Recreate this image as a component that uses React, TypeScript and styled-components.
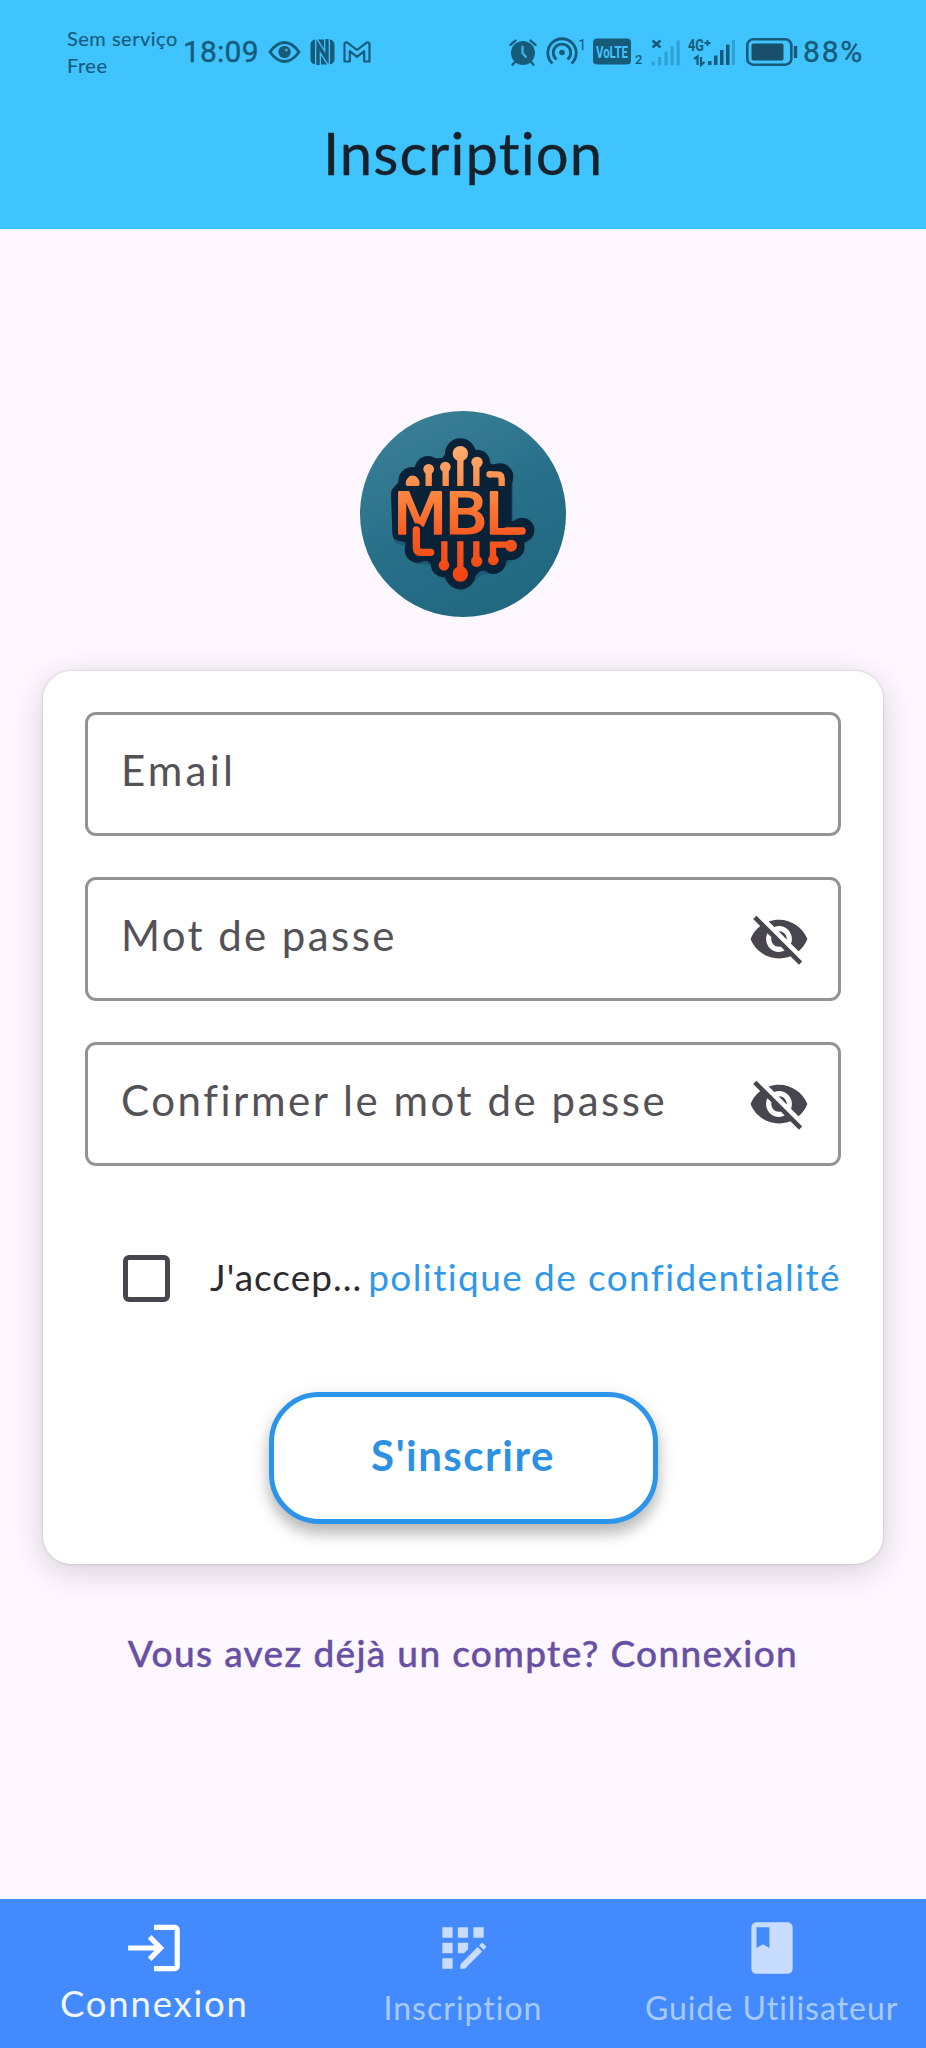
import React from "react";
import styled, { createGlobalStyle } from "styled-components";
import { MdVisibilityOff, MdLogin, MdAppRegistration, MdBook } from "react-icons/md";

const GlobalStyle = createGlobalStyle`
  * { box-sizing: border-box; }
  body { margin: 0; background: #fef7ff; font-family: Lato, "Liberation Sans", sans-serif; }
  button, input { font-family: inherit; }
`;

const ink = "#175b7a";

const Screen = styled.div`
  width: 926px;
  height: 2048px;
  display: flex;
  flex-direction: column;
  background: #fef7ff;
  overflow: hidden;
`;

const Header = styled.header`
  height: 229px;
  background: #40c4ff;
  display: flex;
  flex-direction: column;
`;

const StatusBar = styled.div`
  height: 104px;
  padding: 0 62px 0 67px;
  display: flex;
  justify-content: space-between;
  align-items: center;
  color: ${ink};
`;

const StatusGroup = styled.div`
  display: flex;
  align-items: center;
  svg { display: block; flex: none; overflow: visible; }
`;

const Carrier = styled.div`
  width: 116px;
  font-size: 20px;
  line-height: 27px;
  letter-spacing: 0.5px;
  -webkit-text-stroke: 0.15px ${ink};
  white-space: nowrap;
  padding-bottom: 1px;
`;

const StatusNumber = styled.span<{ $width: number; $track?: number }>`
  width: ${(p) => p.$width}px;
  font-family: Roboto, sans-serif;
  font-size: 30px;
  line-height: 30px;
  letter-spacing: ${(p) => p.$track ?? 0}px;
  -webkit-text-stroke: 0.4px ${ink};
  white-space: nowrap;
`;

const Gap = styled.span<{ $w: number }>`
  flex: none;
  width: ${(p) => p.$w}px;
`;

const Title = styled.h1`
  margin: 0;
  height: 98px;
  line-height: 98px;
  text-align: center;
  font-size: 58px;
  font-weight: 400;
  letter-spacing: 1.1px;
  -webkit-text-stroke: 0.3px #16222b;
  color: #16222b;
`;

const Main = styled.main`
  flex: 1;
  display: flex;
  flex-direction: column;
  align-items: center;
  padding-top: 182px;
`;

const LogoSvg = styled.svg`
  display: block;
  width: 206px;
  height: 206px;
`;

const Card = styled.form`
  width: 840px;
  height: 893px;
  margin-top: 54px;
  padding: 41px 42px 0;
  border-radius: 28px;
  background: #fff;
  box-shadow: 0 0 3px rgba(0, 0, 0, 0.18), 0 8px 34px rgba(0, 0, 0, 0.16);
  display: flex;
  flex-direction: column;
`;

const Field = styled.div`
  height: 124px;
  margin-bottom: 41px;
  padding: 0 28px 0 33px;
  border: 3px solid #939393;
  border-radius: 11px;
  display: flex;
  align-items: center;
  justify-content: space-between;
  color: #49454f;
`;

const FieldLabel = styled.span<{ $track: number }>`
  font-size: 42px;
  line-height: 50px;
  padding-bottom: 8px;
  letter-spacing: ${(p) => p.$track}px;
  color: #545257;
  white-space: nowrap;
`;

const Consent = styled.div`
  margin-top: 47px;
  height: 48px;
  padding-left: 38px;
  display: flex;
  align-items: center;
  font-size: 37px;
  line-height: 48px;
  white-space: nowrap;
`;

const CheckBox = styled.span`
  width: 47px;
  height: 47px;
  border: 5px solid #49454f;
  border-radius: 6px;
  margin-right: 40px;
  flex: none;
`;

const ConsentText = styled.span`
  width: 159px;
  letter-spacing: 1px;
  color: #2c2b30;
  padding-bottom: 3px;
`;

const PolicyLink = styled.a`
  color: #2f98ea;
  letter-spacing: 1.4px;
  padding-bottom: 3px;
`;

const SubmitButton = styled.button`
  align-self: center;
  margin-top: 90px;
  width: 389px;
  height: 132px;
  padding: 0 0 6px;
  border: 5px solid #2d95e9;
  border-radius: 50px;
  background: #fff;
  box-shadow: 0 10px 14px rgba(0, 0, 0, 0.2), 0 6px 20px rgba(0, 0, 0, 0.12);
  color: #2d91e3;
  font-size: 42px;
  font-weight: 700;
  letter-spacing: 1.5px;
`;

const AccountLink = styled.a`
  margin-top: 65px;
  font-size: 37px;
  line-height: 48px;
  font-weight: 500;
  letter-spacing: 1.35px;
  -webkit-text-stroke: 0.4px #6750a4;
  color: #6750a4;
  white-space: nowrap;
`;

const BottomNav = styled.nav`
  height: 149px;
  background: #448aff;
  display: grid;
  grid-template-columns: repeat(3, 1fr);
`;

const NavItem = styled.a<{ $active?: boolean }>`
  display: flex;
  flex-direction: column;
  align-items: center;
  padding-top: 18px;
  color: ${(p) => (p.$active ? "#fff" : "#c7dcff")};
  svg { display: block; flex: none; }
`;

const NavLabel = styled.span<{ $active?: boolean; $track: number }>`
  margin-top: ${(p) => (p.$active ? 2 : 7)}px;
  font-size: ${(p) => (p.$active ? 36.5 : 32)}px;
  line-height: 44px;
  letter-spacing: ${(p) => p.$track}px;
  color: ${(p) => (p.$active ? "#f2f7ff" : "#a9cafd")};
  white-space: nowrap;
`;

const EyeIcon = () => (
  <svg width="33" height="24" viewBox="0 0 33 24" fill="none">
    <path d="M2 12C7 5 11 2.5 16.5 2.5S26 5 31 12c-5 7-9 9.5-14.5 9.5S7 19 2 12Z" stroke={ink} strokeWidth="2.8" />
    <circle cx="16.5" cy="12" r="6.2" fill={ink} />
    <circle cx="18.3" cy="10" r="1.5" fill="#40a5d2" />
  </svg>
);

const NfcIcon = () => (
  <svg width="25" height="26" viewBox="0 0 25 26" fill="none">
    <rect x="0.5" y="0.5" width="24" height="25" rx="5" fill={ink} />
    <path d="M8 26V6L17 20V0" stroke="#40c4ff" strokeWidth="6" />
    <path d="M8 26V6L17 20V0" stroke={ink} strokeWidth="3.400" />
  </svg>
);

const MailIcon = () => (
  <svg width="28" height="22" viewBox="0 0 28 22" fill="none">
    <path
      d="M1.5 20.5V3.2C1.5 1.5 3.4.8 4.7 1.8L14 9l9.3-7.2c1.3-1 3.2-.3 3.2 1.4v17.3h-5.3V10.2L14 15.8l-7.2-5.6v10.3Z"
      stroke={ink}
      strokeWidth="2.2"
      strokeLinejoin="round"
    />
  </svg>
);

const AlarmIcon = () => (
  <svg width="28" height="27" viewBox="0 0 28 27" fill="none" strokeLinecap="round">
    <circle cx="14" cy="14" r="12" fill={ink} />
    <path d="M1.500 5.800l5-4.200M26.500 5.800l-5-4.200M6 23l-2.500 2.700M22 23l2.500 2.700" stroke={ink} strokeWidth="2.400" />
    <path d="M13.500 7.500V14l3.500 4" stroke="#40b4e8" strokeWidth="2.200" />
  </svg>
);

const HotspotIcon = () => (
  <svg width="42" height="30" viewBox="0 0 42 30" fill="none">
    <path d="M6.500 26.500A14.200 14.200 0 1 1 25.500 26.500" stroke={ink} strokeWidth="2.800" />
    <path d="M10.500 22.500A8.700 8.700 0 1 1 21.500 22.500" stroke={ink} strokeWidth="2.800" />
    <circle cx="16" cy="15.500" r="2.800" fill={ink} />
    <text x="32" y="13" fontFamily="Roboto" fontSize="15" fill={ink}>1</text>
  </svg>
);

const VolteIcon = () => (
  <svg width="52" height="28" viewBox="0 0 52 28">
    <rect x="0" y="0.500" width="38" height="26" rx="4" fill={ink} />
    <text x="3" y="19.500" fontFamily="Roboto" fontWeight="700" fontSize="16.500" textLength="32" lengthAdjust="spacingAndGlyphs" fill="#40c4ff">VoLTE</text>
    <text x="42" y="25.500" fontFamily="Roboto" fontWeight="500" fontSize="13" fill={ink}>2</text>
  </svg>
);

const NoSignalIcon = () => (
  <svg width="30" height="27" viewBox="0 0 30 27" fill="none">
    <path d="M1.500 1.500l8 7M9.500 1.500l-8 7" stroke={ink} strokeWidth="2.600" />
    <g fill="#2fa2d4">
      <rect x="0.500" y="22.500" width="3.500" height="4" />
      <rect x="7" y="18" width="3.200" height="8.500" />
      <rect x="13.500" y="12.500" width="3.200" height="14" />
      <rect x="19.500" y="7" width="3.200" height="19.500" />
      <rect x="25.500" y="1.500" width="3.200" height="25" />
    </g>
  </svg>
);

const SignalIcon = () => (
  <svg width="49" height="28" viewBox="0 0 49 28" fill="none">
    <text x="0" y="12.500" fontFamily="Roboto" fontWeight="700" fontSize="16" textLength="16" lengthAdjust="spacingAndGlyphs" fill={ink}>4G</text>
    <path d="M19.500 2v6M16.500 5h6" stroke={ink} strokeWidth="1.800" />
    <path d="M6 21l3.500-2.500V27M13 19v8l3.500-3" stroke={ink} strokeWidth="2.200" />
    <g fill={ink}>
      <rect x="20" y="23" width="3.500" height="4" />
      <rect x="26" y="17.500" width="3.500" height="9.500" />
      <rect x="32" y="12" width="3.500" height="15" />
      <rect x="38" y="6.500" width="3.500" height="20.500" />
    </g>
    <rect x="44" y="2" width="3" height="25" fill="#2fa2d4" />
  </svg>
);

const BatteryIcon = () => (
  <svg width="52" height="28" viewBox="0 0 52 28" fill="none">
    <rect x="1.300" y="1.300" width="44" height="25.400" rx="6" stroke={ink} strokeWidth="2.600" />
    <rect x="5.500" y="5.500" width="32" height="17" rx="2" fill="#1a4f6b" />
    <path d="M49.500 8v12" stroke={ink} strokeWidth="3.400" />
  </svg>
);

const plate =
  "M176 280L180 400 218 408Q218 460 244 460H272L312 498 361 538 410 492 460 486 514 442 526 412 554 390 492 384V224Q488 214 470 216H446L411 180 361 144 318 196 262 200 214 240Z";

const Logo = () => (
  <LogoSvg viewBox="60 33 618 618" fill="none">
    <defs>
      <linearGradient id="disc" x1="200" y1="60" x2="480" y2="640" gradientUnits="userSpaceOnUse">
        <stop offset="0" stopColor="#397e95" />
        <stop offset="0.5" stopColor="#28708a" />
        <stop offset="1" stopColor="#20677f" />
      </linearGradient>
      <linearGradient id="ember" x1="0" y1="140" x2="0" y2="545" gradientUnits="userSpaceOnUse">
        <stop offset="0" stopColor="#ffae72" />
        <stop offset="0.350" stopColor="#fd853f" />
        <stop offset="0.650" stopColor="#f75a22" />
        <stop offset="1" stopColor="#f24312" />
      </linearGradient>
    </defs>
    <circle cx="369" cy="342" r="309" fill="url(#disc)" />
    <path d={plate} transform="translate(3 10)" fill="#1b5c74" stroke="#1b5c74" strokeWidth="48" strokeLinejoin="round" />
    <g fill="#092238">
      <path d={plate} stroke="#092238" strokeWidth="46" strokeLinejoin="round" />
      <circle cx="217" cy="243" r="42" />
      <circle cx="264" cy="208" r="40" />
      <circle cx="361" cy="161" r="46" />
      <circle cx="412" cy="187" r="38" />
      <circle cx="480" cy="230" r="40" />
      <circle cx="546" cy="390" r="37" />
      <circle cx="232" cy="450" r="38" />
      <circle cx="311" cy="494" r="38" />
      <circle cx="361" cy="522" r="46" />
      <circle cx="460" cy="484" r="38" />
      <circle cx="514" cy="440" r="40" />
    </g>
    <text
      transform="scale(1.1 1)"
      x="144.500 285.500 394.500"
      y="402"
      fontFamily="DejaVu Sans, sans-serif"
      fontSize="171"
      fill="url(#ember)"
      stroke="url(#ember)"
      strokeWidth="6"
      strokeLinejoin="round"
    >
      MBL
    </text>
    <path d="M500 393H546" stroke="url(#ember)" strokeWidth="23" strokeLinecap="round" />
    <path d="M229 390V442Q229 457 244 457H272" stroke="#092238" strokeWidth="40" strokeLinecap="round" />
    <g stroke="url(#ember)" strokeWidth="19">
      <path d="M266 215V258M317 205V258M361 165V258M409 190V258" />
      <path d="M448 223H472Q485 223 485 236V258" />
      <path d="M229 390V442Q229 457 244 457H272" strokeLinecap="round" strokeWidth="22" />
      <path d="M313 424V490M361 424V515M409 424V480M459 475V434H510" />
    </g>
    <g fill="url(#ember)">
      <path d="M197 252a20 24 0 0 1 42 0q0 6-6 6h-30q-6 0-6-6z" />
      <circle cx="266" cy="208" r="16" />
      <circle cx="316" cy="201" r="16" />
      <circle cx="361" cy="161" r="23" />
      <circle cx="411" cy="187" r="17" />
      <circle cx="449" cy="223" r="10" />
      <circle cx="312" cy="496" r="16" />
      <circle cx="361" cy="522" r="23" />
      <circle cx="410" cy="484" r="17" />
      <circle cx="460" cy="480" r="16" />
      <circle cx="513" cy="437" r="18" />
    </g>
  </LogoSvg>
);

export default function App() {
  return (
    <>
      <GlobalStyle />
      <Screen>
        <Header>
          <StatusBar>
            <StatusGroup>
              <Carrier>
                <div>Sem serviço</div>
                <div>Free</div>
              </Carrier>
              <StatusNumber $width={85} $track={0.2}>18:09</StatusNumber>
              <EyeIcon />
              <Gap $w={9} />
              <NfcIcon />
              <Gap $w={8} />
              <MailIcon />
            </StatusGroup>
            <StatusGroup>
              <AlarmIcon />
              <Gap $w={9} />
              <HotspotIcon />
              <Gap $w={5} />
              <VolteIcon />
              <Gap $w={6} />
              <NoSignalIcon />
              <Gap $w={7} />
              <SignalIcon />
              <Gap $w={9} />
              <BatteryIcon />
              <Gap $w={5} />
              <StatusNumber $width={61} $track={1.8}>88%</StatusNumber>
            </StatusGroup>
          </StatusBar>
          <Title>Inscription</Title>
        </Header>
        <Main>
          <Logo />
          <Card>
            <Field>
              <FieldLabel $track={3.2}>Email</FieldLabel>
            </Field>
            <Field>
              <FieldLabel $track={2.4}>Mot de passe</FieldLabel>
              <MdVisibilityOff size={62} />
            </Field>
            <Field>
              <FieldLabel $track={2.55}>Confirmer le mot de passe</FieldLabel>
              <MdVisibilityOff size={62} />
            </Field>
            <Consent>
              <CheckBox role="checkbox" aria-checked="false" />
              <ConsentText>J'accep...</ConsentText>
              <PolicyLink>politique de confidentialité</PolicyLink>
            </Consent>
            <SubmitButton type="button">S'inscrire</SubmitButton>
          </Card>
          <AccountLink>Vous avez déjà un compte? Connexion</AccountLink>
        </Main>
        <BottomNav>
          <NavItem $active>
            <MdLogin size={62} />
            <NavLabel $active $track={1.8}>Connexion</NavLabel>
          </NavItem>
          <NavItem>
            <MdAppRegistration size={62} />
            <NavLabel $track={1}>Inscription</NavLabel>
          </NavItem>
          <NavItem>
            <MdBook size={62} />
            <NavLabel $track={1}>Guide Utilisateur</NavLabel>
          </NavItem>
        </BottomNav>
      </Screen>
    </>
  );
}
